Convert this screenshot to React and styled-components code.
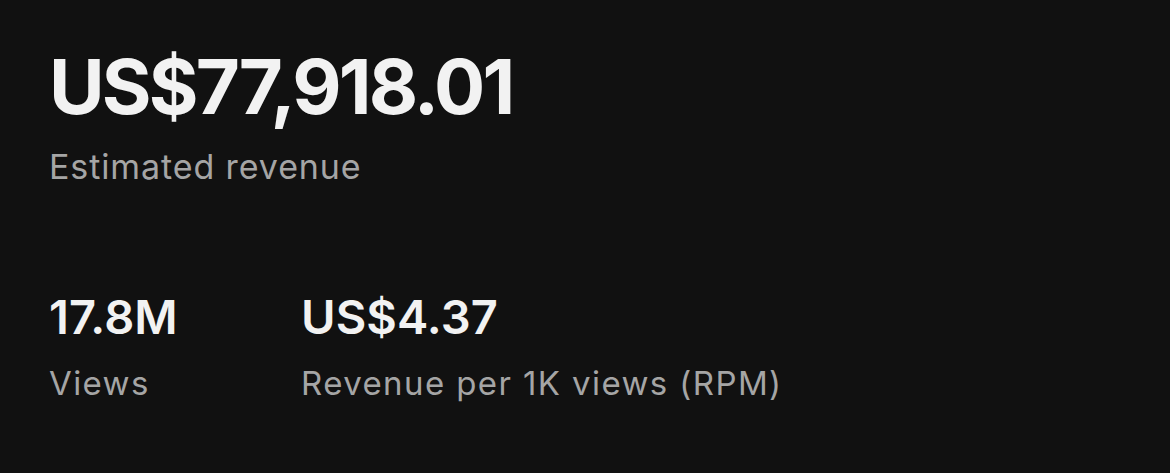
import React from 'react'
import styled, { createGlobalStyle } from 'styled-components'

const Global = createGlobalStyle`
  html, body {
    margin: 0;
    padding: 0;
    background: #111111;
  }
`

const Page = styled.div`
  width: 1170px;
  height: 473px;
  background: #111111;
  padding: 48px 0 0 49px;
  box-sizing: border-box;
  color: #f2f2f2;
  font-family: Inter, "Liberation Sans", sans-serif;
`

const Total = styled.div`
  font-weight: 700;
  font-size: 76px;
  line-height: 76px;
  letter-spacing: -2.8px;
`

const Caption = styled.div`
  font-size: ${p => p.$size}px;
  line-height: ${p => p.$size}px;
  letter-spacing: ${p => p.$track}px;
  color: #a5a5a5;
  margin-top: ${p => p.$gap}px;
  white-space: nowrap;
`

const Stats = styled.div`
  display: flex;
  margin-top: 109px;
`

const Stat = styled.div`
  width: ${p => p.$width}px;
`

const Value = styled.div`
  font-weight: 600;
  font-size: 47px;
  line-height: 47px;
  letter-spacing: 0.1px;
`

const stats = [
  { value: '17.8M', label: 'Views', width: 252 },
  { value: 'US$4.37', label: 'Revenue per 1K views (RPM)', width: 520 },
]

export default function App() {
  return (
    <Page>
      <Global />
      <Total>US$77,918.01</Total>
      <Caption $size={34} $gap={26} $track={0.9}>Estimated revenue</Caption>
      <Stats>
        {stats.map(s => (
          <Stat key={s.label} $width={s.width}>
            <Value>{s.value}</Value>
            <Caption $size={33} $gap={27} $track={1.4}>{s.label}</Caption>
          </Stat>
        ))}
      </Stats>
    </Page>
  )
}
